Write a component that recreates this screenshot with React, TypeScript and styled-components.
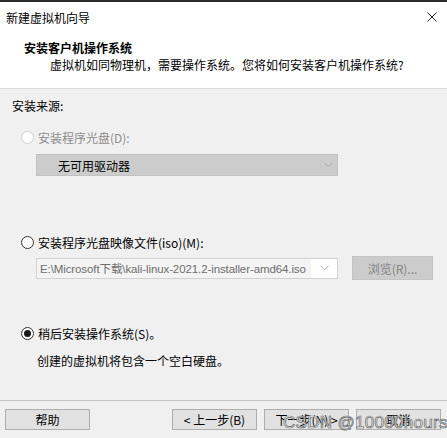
import React from "react";
import styled, { createGlobalStyle } from "styled-components";

const Global = createGlobalStyle`
  html, body { margin: 0; padding: 0; background: #f0f0f0; }
  body { font-family: "Noto Sans CJK SC", "Microsoft YaHei", sans-serif; font-size: 12px; color: #000; }
  * { box-sizing: border-box; }
`;

const Window = styled.div`
  width: 447px;
  height: 438px;
  display: flex;
  flex-direction: column;
  border-top: 2px solid #2a2a2a;
  background: #f0f0f0;
  position: relative;
  overflow: hidden;
`;

const Header = styled.div`
  background: #fff;
  height: 87px;
  border-bottom: 1px solid #dadada;
  display: flex;
  flex-direction: column;
`;

const TitleBar = styled.div`
  height: 30px;
  display: flex;
  align-items: center;
  justify-content: space-between;
  padding: 0 10px 0 6px;
  line-height: 17px;
`;

const CloseIcon = styled.svg`
  width: 10px;
  height: 10px;
  display: block;
`;

const HeadTitle = styled.div`
  font-weight: bold;
  line-height: 17px;
  margin: 7px 0 0 24px;
`;

const HeadSub = styled.div`
  line-height: 17px;
  margin-left: 50px;
`;

const Body = styled.div`
  flex: 1;
  display: flex;
  flex-direction: column;
  padding: 8px 0 0 12px;
`;

const Label = styled.div`
  line-height: 17px;
`;

const RadioRow = styled.label<{ $top: number; $disabled?: boolean }>`
  display: flex;
  align-items: center;
  gap: 4px;
  margin: ${(p) => p.$top}px 0 0 9px;
  line-height: 17px;
  color: ${(p) => (p.$disabled ? "#8d8d8d" : "#000")};
`;

const Circle = styled.span<{ $checked?: boolean; $disabled?: boolean }>`
  width: 13px;
  height: 13px;
  border-radius: 50%;
  border: 1px solid ${(p) => (p.$disabled ? "#cfcfcf" : "#333")};
  background: #fff;
  display: flex;
  align-items: center;
  justify-content: center;
  flex: none;
  &::after {
    content: "";
    display: ${(p) => (p.$checked ? "block" : "none")};
    width: 7px;
    height: 7px;
    border-radius: 50%;
    background: #1a1a1a;
  }
`;

const Select = styled.div<{ $top: number }>`
  margin: ${(p) => p.$top}px 0 0 24px;
  width: 302px;
  height: 22px;
  background: #cccccc;
  border: 1px solid #c2c2c2;
  display: flex;
  align-items: center;
  justify-content: space-between;
  padding: 0 4px 0 21px;
  line-height: 17px;
`;

const Chevron = styled.svg`
  width: 9px;
  height: 6px;
  display: block;
`;

const IsoRow = styled.div`
  display: flex;
  align-items: center;
  gap: 14px;
  margin: 5px 0 0 24px;
  height: 24px;
`;

const IsoInput = styled.div`
  width: 302px;
  height: 21px;
  border: 1px solid #d2d2d2;
  background: #fff;
  display: flex;
  align-items: stretch;
`;

const IsoText = styled.div`
  flex: 1;
  background: #f4f4f4;
  color: #6d6d6d;
  padding-left: 3px;
  display: flex;
  align-items: center;
  white-space: nowrap;
  overflow: hidden;
  font-family: "Liberation Sans", "Noto Sans CJK SC", sans-serif;
  font-size: 11.5px;
  letter-spacing: -0.1px;
`;

const IsoDrop = styled.div`
  width: 26px;
  display: flex;
  align-items: center;
  justify-content: center;
`;

const Browse = styled.div`
  width: 81px;
  height: 24px;
  background: #cccccc;
  border: 1px solid #c4c4c4;
  color: #838383;
  display: flex;
  align-items: center;
  justify-content: center;
`;

const Desc = styled.div`
  margin: 10px 0 0 25px;
  line-height: 17px;
`;

const Footer = styled.div`
  border-top: 1px solid #c4c4c4;
  height: 38px;
  padding: 8px 6px 8px 5px;
  display: flex;
  justify-content: space-between;
`;

const ButtonGroup = styled.div`
  display: flex;
  gap: 7px;
`;

const Button = styled.div`
  width: 85px;
  height: 21px;
  background: #e1e1e1;
  border: 1px solid #adadad;
  display: flex;
  align-items: center;
  justify-content: center;
  line-height: 17px;
`;

const Watermark = styled.div`
  position: absolute;
  left: 283px;
  top: 411px;
  font-family: "Liberation Sans", Arial, sans-serif;
  font-size: 17px;
  letter-spacing: 0.3px;
  color: rgba(255, 255, 255, 0.9);
  -webkit-text-stroke: 0.7px #666;
  pointer-events: none;
  white-space: nowrap;
`;

const ChevronIcon = () => (
  <Chevron viewBox="0 0 9 6">
    <path d="M0.5 0.8 L4.5 4.8 L8.5 0.8" fill="none" stroke="#a8a8a8" strokeWidth="0.9" />
  </Chevron>
);

export default function App() {
  return (
    <>
      <Global />
      <Window>
        <Header>
          <TitleBar>
            <span>新建虚拟机向导</span>
            <CloseIcon viewBox="0 0 10 10">
              <path d="M0.5 0.5 L9.5 9.5 M9.5 0.5 L0.5 9.5" stroke="#222" strokeWidth="1" />
            </CloseIcon>
          </TitleBar>
          <HeadTitle>安装客户机操作系统</HeadTitle>
          <HeadSub>虚拟机如同物理机，需要操作系统。您将如何安装客户机操作系统?</HeadSub>
        </Header>
        <Body>
          <Label>安装来源:</Label>
          <RadioRow $top={15} $disabled>
            <Circle $disabled />
            安装程序光盘(D):
          </RadioRow>
          <Select $top={8}>
            <span>无可用驱动器</span>
            <ChevronIcon />
          </Select>
          <RadioRow $top={58}>
            <Circle />
            安装程序光盘映像文件(iso)(M):
          </RadioRow>
          <IsoRow>
            <IsoInput>
              <IsoText>E:\Microsoft下载\kali-linux-2021.2-installer-amd64.iso</IsoText>
              <IsoDrop>
                <ChevronIcon />
              </IsoDrop>
            </IsoInput>
            <Browse>浏览(R)...</Browse>
          </IsoRow>
          <RadioRow $top={45}>
            <Circle $checked />
            稍后安装操作系统(S)。
          </RadioRow>
          <Desc>创建的虚拟机将包含一个空白硬盘。</Desc>
        </Body>
        <Footer>
          <Button>帮助</Button>
          <ButtonGroup>
            <Button>&lt; 上一步(B)</Button>
            <Button>下一步(N) &gt;</Button>
            <Button>取消</Button>
          </ButtonGroup>
        </Footer>
        <Watermark>CSDN @10000hours</Watermark>
      </Window>
    </>
  );
}
